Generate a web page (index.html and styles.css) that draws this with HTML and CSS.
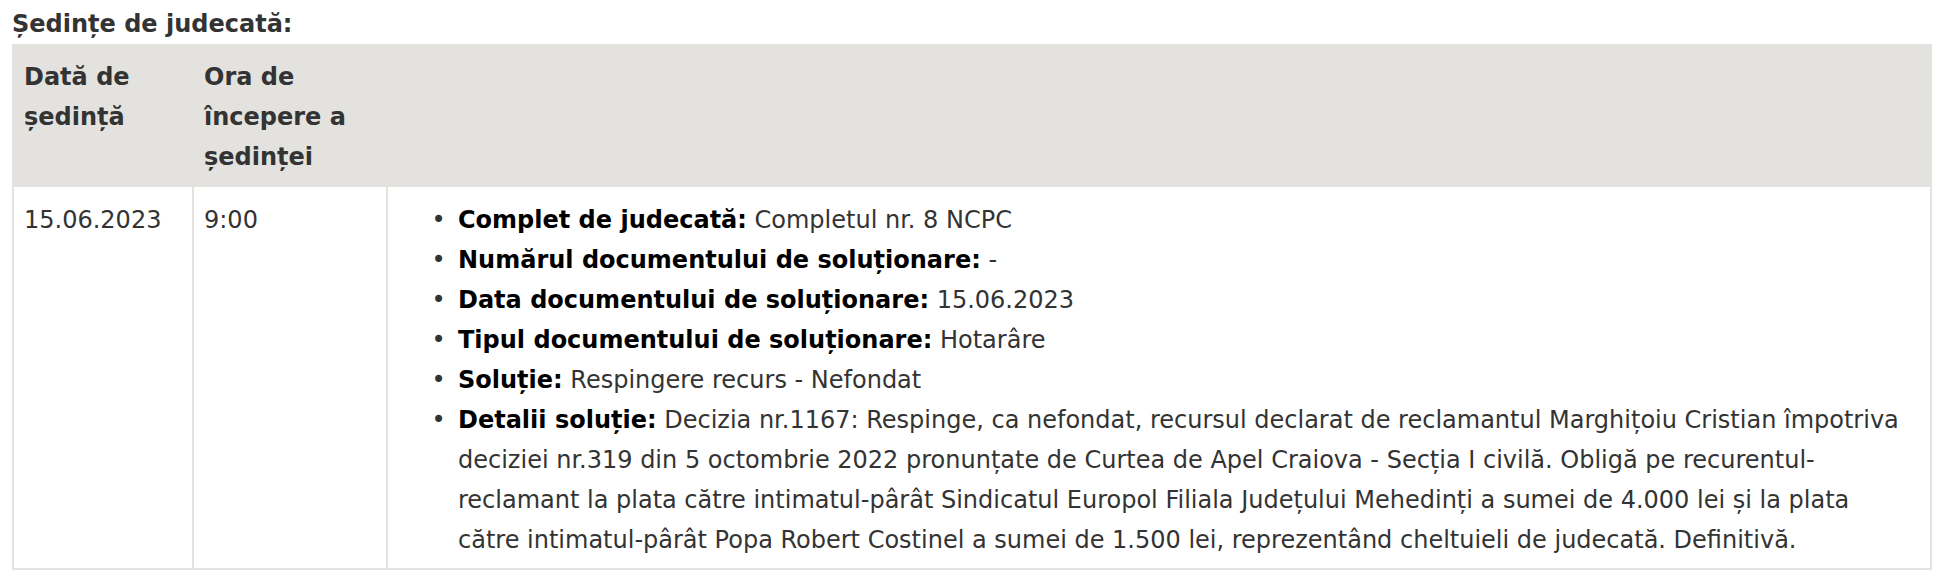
FILE: index.html
```html
<!DOCTYPE html>
<html lang="ro">
<head>
<meta charset="utf-8">
<title>Ședințe de judecată</title>
<link rel="stylesheet" href="styles.css">
</head>
<body>
<div class="page">
  <div class="section-title">Ședințe de judecată:</div>
  <table class="hearings">
    <colgroup>
      <col class="col-date">
      <col class="col-time">
      <col class="col-details">
    </colgroup>
    <thead>
      <tr>
        <th>Dată de ședință</th>
        <th>Ora de începere a ședinței</th>
        <th></th>
      </tr>
    </thead>
    <tbody>
      <tr>
        <td>15.06.2023</td>
        <td>9:00</td>
        <td class="details-cell">
          <ul class="details">
            <li><b>Complet de judecată:</b> Completul nr. 8 NCPC</li>
            <li><b>Numărul documentului de soluționare:</b> -</li>
            <li><b>Data documentului de soluționare:</b> 15.06.2023</li>
            <li><b>Tipul documentului de soluționare:</b> Hotarâre</li>
            <li><b>Soluție:</b> Respingere recurs - Nefondat</li>
            <li><b>Detalii soluție:</b> Decizia nr.1167: Respinge, ca nefondat, recursul declarat de reclamantul Marghițoiu Cristian împotriva deciziei nr.319 din 5 octombrie 2022 pronunțate de Curtea de Apel Craiova - Secția I civilă. Obligă pe recurentul-reclamant la plata către intimatul-pârât Sindicatul Europol Filiala Județului Mehedinți a sumei de 4.000 lei și la plata către intimatul-pârât Popa Robert Costinel a sumei de 1.500 lei, reprezentând cheltuieli de judecată. Definitivă.</li>
          </ul>
        </td>
      </tr>
    </tbody>
  </table>
</div>
</body>
</html>
```

FILE: styles.css
```css
html, body {
  margin: 0;
  padding: 0;
  background: #ffffff;
}

body {
  font-family: "DejaVu Sans", Verdana, sans-serif;
  font-size: 24px;
  line-height: 40px;
  color: #333333;
}

.page {
  padding: 4px 8px 0 12px;
}

.section-title {
  font-weight: bold;
  color: #333333;
}

.hearings {
  width: 1920px;
  border-collapse: collapse;
  table-layout: fixed;
}

.col-date { width: 180px; }
.col-time { width: 194px; }

.hearings th {
  background: #e3e2de;
  border: 2px solid #e3e2de;
  text-align: left;
  vertical-align: top;
  font-weight: bold;
  color: #333333;
  padding: 11px 10px 8px 10px;
}

.hearings td {
  border: 2px solid #e3e2de;
  vertical-align: top;
  padding: 13px 10px 8px 10px;
  color: #333333;
}

.hearings td.details-cell {
  padding-right: 24px;
}

.details {
  margin: 0;
  padding: 0 0 0 60px;
}

.details li::marker {
  content: "\2022\00a0\2009";
  color: #333333;
}

.details b {
  color: #000000;
}
```
